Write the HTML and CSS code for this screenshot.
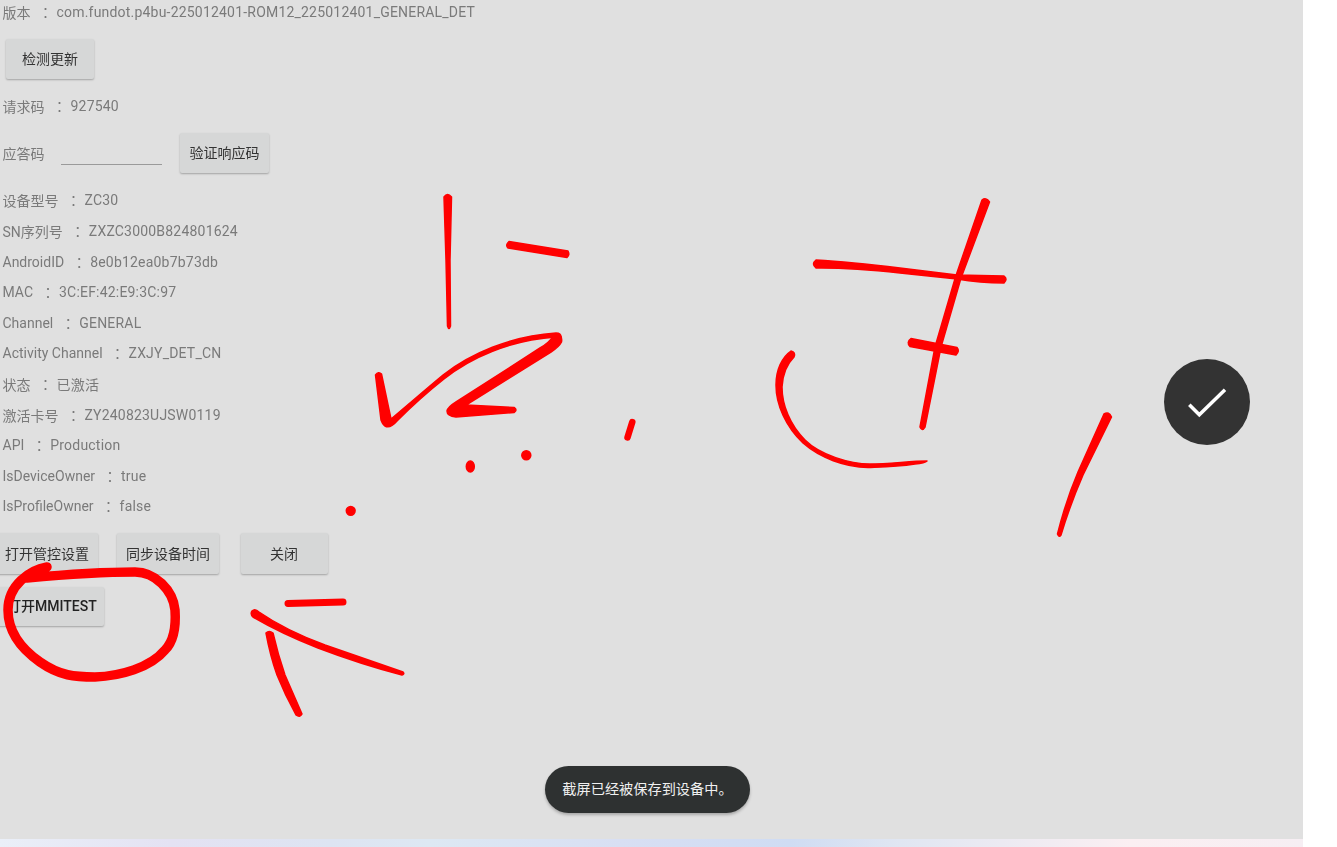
FILE: index.html
```html
<!DOCTYPE html>
<html lang="zh-CN">
<head>
<meta charset="utf-8">
<title>设备信息</title>
<link rel="stylesheet" href="styles.css">
</head>
<body>
<main class="screen">
  <div class="info version"><span>版本</span><span class="colon">：</span><span>com.fundot.p4bu-225012401-ROM12_225012401_GENERAL_DET</span></div>
  <div class="actions first"><button class="btn wide">检测更新</button></div>
  <div class="info"><span>请求码</span><span class="colon">：</span><span>927540</span></div>
  <div class="answer">
    <span>应答码</span>
    <span class="field"></span>
    <button class="btn verify">验证响应码</button>
  </div>
  <section class="list">
    <div class="info"><span>设备型号</span><span class="colon">：</span><span>ZC30</span></div>
    <div class="info"><span>SN序列号</span><span class="colon">：</span><span>ZXZC3000B824801624</span></div>
    <div class="info"><span>AndroidID</span><span class="colon">：</span><span>8e0b12ea0b7b73db</span></div>
    <div class="info"><span>MAC</span><span class="colon">：</span><span>3C:EF:42:E9:3C:97</span></div>
    <div class="info"><span>Channel</span><span class="colon">：</span><span>GENERAL</span></div>
    <div class="info"><span>Activity Channel</span><span class="colon">：</span><span>ZXJY_DET_CN</span></div>
    <div class="info"><span>状态</span><span class="colon">：</span><span>已激活</span></div>
    <div class="info"><span>激活卡号</span><span class="colon">：</span><span>ZY240823UJSW0119</span></div>
    <div class="info"><span>API</span><span class="colon">：</span><span>Production</span></div>
    <div class="info"><span>IsDeviceOwner</span><span class="colon">：</span><span>true</span></div>
    <div class="info"><span>IsProfileOwner</span><span class="colon">：</span><span>false</span></div>
  </section>
  <div class="actions bleed">
    <button class="btn">打开管控设置</button>
    <button class="btn">同步设备时间</button>
    <button class="btn close">关闭</button>
  </div>
  <div class="actions bleed second"><button class="btn mmi">打开MMITEST</button></div>
</main>
<div class="strip"></div>

<svg class="ink" viewBox="0 0 1337 847" aria-hidden="true">
  <g class="ink-fill">
    <path d="M444 197Q447.500 192 451.500 197L450 260L450.500 326Q449 331 447.500 326L446 260Z"/>
    <path d="M509 241.500L568 251Q570 255 567 257.500L508 248Q505 245 509 241.500Z"/>
    <path d="M375.500 375Q378.500 371 381.500 374L391 419C410 403 425 390 443 375C470 354 510 336 556 333Q561 333 561 337L556 337C510 340 470 358 444 379C425 394 410 408 397 421Q390 429 385 426Q383 425 381 420Z"/>
    <path d="M553 336Q563 332 561.500 342Q559 347 551 352L466 405L514 407.500Q518 410 514 412.500L456 417Q447 416 447 411Q448 407 456 402L540 348Q550 342 553 336Z"/>
    <ellipse cx="470.300" cy="466.500" rx="4" ry="5.500"/>
    <circle cx="526.300" cy="455.300" r="4.500"/>
    <circle cx="350.700" cy="510.800" r="4.400"/>
    <path d="M982 200Q986 197 989.500 202L961 278L941 347L925 427Q922 432 920 427L935 347L955.500 277Z"/>
    <path d="M816 260Q850 262 900 268L957 275L1004 276Q1008 279 1004 283Q980 283 957 279L900 273Q850 267.500 816 268Q811 264 816 260Z"/>
    <path d="M911 338.500L957 347.500Q960 351 956 355L910 346.500Q906 342 911 338.500Z"/>
    <path d="M791 351Q796 352 794 357Q783 368 782 387C782 405 790 425 805 440C820 455 850 464 870 464C890 464 910 461 927 461Q925 463 915 464C895 467 880 467 868 467.500C845 467 820 458 803 443C786 427 776 405 776 385C776 370 782 357 791 351Z"/>
    <path d="M1104 414Q1109 411 1111.500 417L1083 475Q1070 505 1061 535Q1059 538 1057.500 534Q1066 500 1078 472Z"/>
    <path d="M252 611Q255 608 259 612Q285 630 325 645L403 672Q405 674 402 675Q360 664 318 648Q280 633 253 617Q250 614 252 611Z"/>
    <path d="M266 633Q269 630 273 633Q278 655 285 675L302 714Q300 718 296 715Q285 695 277 675Q270 655 266 633Z"/>
  </g>
  <g class="ink-line">
    <path class="w5" d="M632.300 422L627.500 437.500"/>
    <path class="w6" d="M288 603.500L343 602"/>
    <path class="w9" d="M47 567C30 570 8 585 8 610C8 630 20 648 40 662C60 676 75 677 95 677C120 676 150 668 165 650C175 640 176 625 175 610C173 590 155 572 135 572C110 572 60 575 27 578"/>
  </g>
</svg>

<button class="fab" aria-label="完成">
  <svg class="fab-icon" viewBox="0 0 40 30" aria-hidden="true"><path d="M2.300 14.700L12.300 24.700L38 -0.300"/></svg>
</button>
<div class="toast">截屏已经被保存到设备中。</div>
</body>
</html>
```

FILE: styles.css
```css
html, body {
  margin: 0;
  height: 100%;
  background: #fff;
  overflow: hidden;
}

body {
  position: relative;
  width: 1337px;
  height: 847px;
  font-family: Roboto, "Noto Sans CJK SC", sans-serif;
  font-size: 14px;
  color: #7a7a7a;
}

.screen {
  box-sizing: border-box;
  width: 1303px;
  height: 839px;
  background: #e0e0e0;
  display: flex;
  flex-direction: column;
  padding-left: 2.5px;
  overflow: hidden;
}

.screen > * {
  filter: blur(0.3px);
}

.info {
  display: flex;
  align-items: center;
  height: 30.6px;
  white-space: nowrap;
}

.info > span:last-child {
  letter-spacing: 0.2px;
}

.version {
  height: 24px;
}

.colon {
  font-family: "Noto Sans CJK TC", sans-serif;
  margin: 0 4px 0 8px;
}

.list {
  display: flex;
  flex-direction: column;
  margin-top: 11.7px;
}

.actions {
  display: flex;
  margin: 14.5px 0 11.7px 3.5px;
}

.actions.bleed {
  margin: 11.7px 0 0 -6.5px;
  gap: 19px;
}

.actions.second {
  margin-top: 13px;
}

.btn {
  height: 40.5px;
  padding: 0 9px 2px;
  border: 0;
  border-radius: 2px;
  background: #d6d7d7;
  color: #333;
  font: inherit;
  white-space: nowrap;
  box-shadow: 0 1px 2px rgba(0, 0, 0, 0.28);
}

.wide {
  padding: 0 16px 2px;
}

.verify {
  padding: 0 9.5px 2px;
}

.close {
  width: 87px;
  margin-left: 2.5px;
}

.mmi {
  height: 39px;
  color: #222;
  font-weight: 500;
  padding: 0 7px 2px 11px;
}

.answer {
  display: flex;
  align-items: center;
  height: 40.5px;
  margin-top: 11.7px;
}

.field {
  width: 101px;
  height: 1.5px;
  margin: 23px 18.5px 0 16px;
  background: #9a9a9a;
}

.strip {
  width: 1303px;
  height: 8px;
  background: linear-gradient(90deg, #eaeff8 0, #e4e2f3 170px, #dde4f2 330px, #dde8f3 430px, #d8dff3 620px, #cfdcf3 790px, #e0e6f2 900px, #fbeff2 1130px, #f6eef3 1303px);
}

.ink {
  position: absolute;
  left: 0;
  top: 0;
  width: 1337px;
  height: 847px;
  pointer-events: none;
}

.ink-fill {
  fill: #f00;
  stroke: #f00;
  stroke-width: 1.5px;
  stroke-linejoin: round;
}

.ink-line {
  fill: none;
  stroke: #f00;
  stroke-linecap: round;
  stroke-linejoin: round;
}

.w5 { stroke-width: 6.5px; }
.w6 { stroke-width: 7px; }
.w9 { stroke-width: 9.5px; }

.fab {
  position: absolute;
  left: 1164px;
  top: 359px;
  width: 86px;
  height: 86px;
  padding: 0;
  border: 0;
  border-radius: 50%;
  background: #333;
}

.fab-icon {
  position: absolute;
  left: 23px;
  top: 31px;
  width: 40px;
  height: 30px;
  overflow: visible;
}

.fab-icon path {
  fill: none;
  stroke: #fff;
  stroke-width: 3.5px;
}

.toast {
  position: absolute;
  left: 545px;
  top: 766px;
  width: 205px;
  height: 47px;
  border-radius: 23.5px;
  background: #2e3131;
  color: #f0f0f0;
  font-size: 14.2px;
  line-height: 47px;
  text-align: center;
  box-shadow: 0 2px 3px rgba(0, 0, 0, 0.25);
}
```
